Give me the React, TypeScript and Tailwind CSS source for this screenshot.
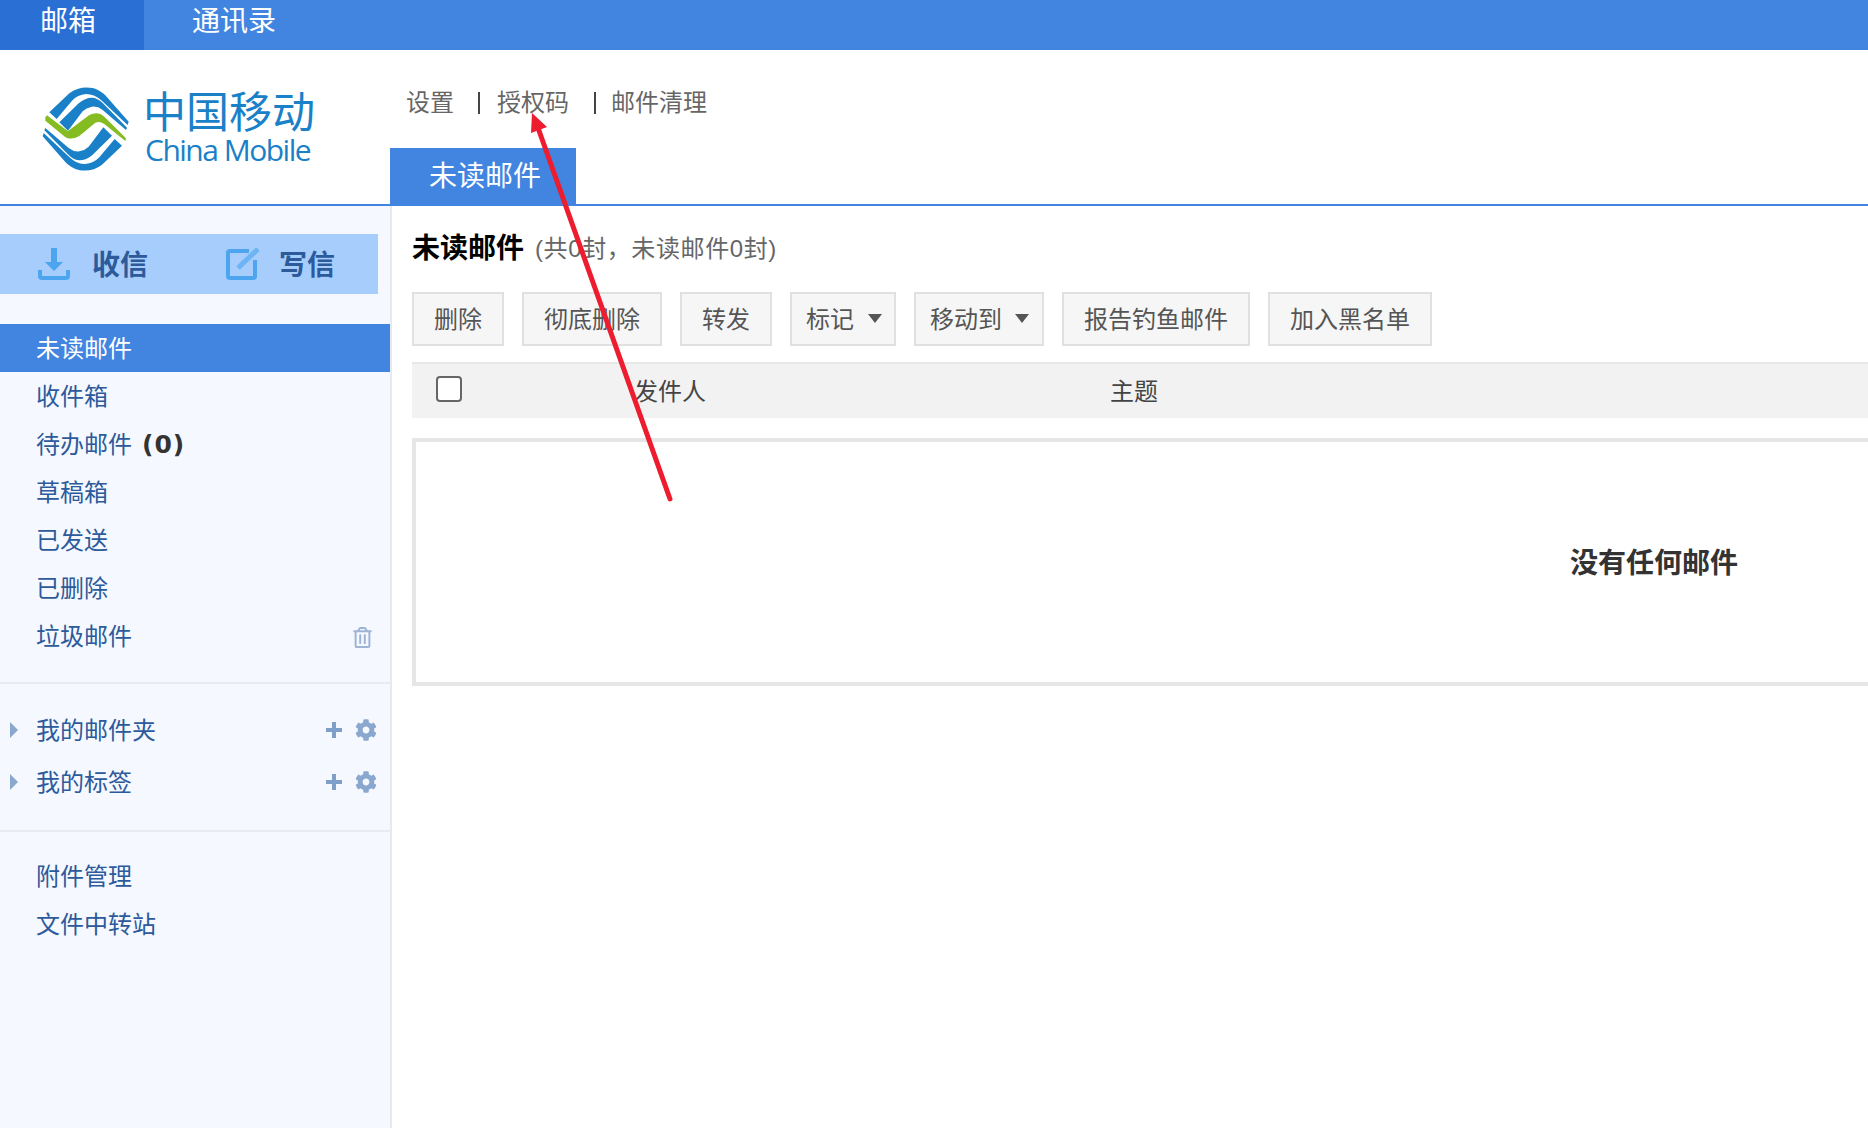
import React from "react";
import { FaCog, FaRegTrashAlt } from "react-icons/fa";

function Emblem() {
  const bands = (
    <>
      <path d="M40 97 L100 40 Q130 17 170 24 Q190 29 208 46 L278 125 L275 135 L195 60 Q175 42 150 42 Q125 44 108 62 L62 117 Z" fill="#1a80c8" />
      <path d="M70 127 L128 70 Q148 52 170 53 Q186 55 200 69 L273 143 L270 150 L200 90 Q185 78 168 80 Q150 84 140 94 L96 152 Z" fill="#1a80c8" />
    </>
  );
  return (
    <svg width="100" height="100" viewBox="0 0 300 300" className="shrink-0">
      {bands}
      <g transform="rotate(180 149 147)">{bands}</g>
      <path d="M28 112 L33 106 L95 153 L100 150 L160 105 Q185 92 205 110 L270 175 L268 183 L205 132 Q190 122 178 128 L130 168 Q100 185 80 165 L28 122 Z" fill="#85bc22" />
    </svg>
  );
}

function DownloadIcon() {
  return (
    <svg width="32" height="32" viewBox="0 0 32 32" className="shrink-0">
      <path d="M13 0 H19 V14 H25 L16 23 L7 14 H13 Z" fill="#4ea5ef" />
      <path d="M2 22 V28 Q2 30 4 30 H28 Q30 30 30 28 V22" fill="none" stroke="#4ea5ef" strokeWidth="4" />
    </svg>
  );
}

function ComposeIcon() {
  return (
    <svg width="34" height="32" viewBox="0 0 34 32" className="shrink-0">
      <path d="M24 3 H5 Q3 3 3 5 V28 Q3 30 5 30 H28 Q30 30 30 28 V12" fill="none" stroke="#4ea5ef" strokeWidth="4" />
      <path d="M33 1 L13 20" fill="none" stroke="#6cb4f3" strokeWidth="5" />
    </svg>
  );
}

function Caret() {
  return (
    <svg width="14" height="9" viewBox="0 0 14 9" className="shrink-0">
      <polygon points="0,0 14,0 7,9" fill="#555" />
    </svg>
  );
}

function SideArrow() {
  return (
    <svg width="8" height="16" viewBox="0 0 8 16" className="shrink-0">
      <polygon points="0,0 8,8 0,16" fill="#8aa8cf" />
    </svg>
  );
}

function Plus() {
  return (
    <svg width="16" height="16" viewBox="0 0 16 16" className="shrink-0">
      <path d="M6 0 H10 V6 H16 V10 H10 V16 H6 V10 H0 V6 H6 Z" fill="#7e9fc8" />
    </svg>
  );
}

const btnBase =
  "h-[54px] pt-[2px] border-2 border-[#e0e0e0] bg-[#f6f6f6] text-[24px] text-[#555] flex items-center";

function SideRow({ label, active, children }: { label: string; active?: boolean; children?: React.ReactNode }) {
  return (
    <div
      className={
        active
          ? "h-[48px] pt-[2px] flex items-center pl-[36px] text-[24px] bg-[#4285e0] text-white"
          : "h-[48px] pt-[2px] flex items-center pl-[36px] text-[24px] text-[#2c5a9b]"
      }
    >
      {label}
      {children}
    </div>
  );
}

function FolderRow({ label }: { label: string }) {
  return (
    <div className="h-[52px] flex items-center pl-[10px] text-[24px] text-[#2c5a9b]">
      <SideArrow />
      <span className="ml-[18px] pt-[2px]">{label}</span>
      <div className="ml-auto mr-[13px] flex items-center">
        <Plus />
        <FaCog className="ml-[13px] text-[22px] text-[#8aa8cf]" />
      </div>
    </div>
  );
}

export default function App() {
  return (
    <div className="relative h-screen w-full overflow-hidden bg-white flex flex-col [font-family:'Liberation_Sans','Noto_Sans_CJK_SC',sans-serif]">
      <div className="h-[50px] shrink-0 bg-[#4285e0] flex text-[28px] text-white">
        <div className="w-[144px] bg-[#2a6fd4] pl-[40px] pb-[6px] flex items-center">邮箱</div>
        <div className="ml-[48px] pb-[6px] flex items-center">通讯录</div>
      </div>

      <div className="h-[156px] shrink-0 border-b-2 border-[#4285e0] flex">
        <div className="w-[390px] shrink-0 pl-[36px] pt-[30px] flex items-start">
          <Emblem />
          <div className="ml-[7px] mt-[11px] w-[174px] text-[#1a80c8]">
            <div className="text-[43px] leading-[44px]">中国移动</div>
            <div className="text-[30px] leading-[30px] font-medium tracking-[-1.5px] ml-[2px] whitespace-nowrap [font-family:'Open_Sans',sans-serif]">China Mobile</div>
          </div>
        </div>
        <div className="flex flex-col">
          <div className="h-[98px] pl-[16px] pt-[8px] flex items-center text-[24px] text-[#666]">
            <span>设置</span>
            <span className="ml-[24px] w-[2px] h-[22px] bg-[#444]" />
            <span className="ml-[17px]">授权码</span>
            <span className="ml-[25px] w-[2px] h-[22px] bg-[#444]" />
            <span className="ml-[15px]">邮件清理</span>
          </div>
          <div className="w-[186px] h-[56px] pt-[2px] bg-[#4285e0] pl-[39px] flex items-center text-[28px] text-white">未读邮件</div>
        </div>
      </div>

      <div className="flex-1 min-h-0 flex">
        <aside className="w-[392px] shrink-0 bg-[#f5f8ff] border-r-2 border-[#e6e9f0]">
          <div className="mt-[28px] w-[378px] h-[60px] bg-[#a6cdfb] flex items-center pl-[38px] text-[28px] font-bold text-[#2c5a9b]">
            <DownloadIcon />
            <span className="ml-[22px] pt-[4px]">收信</span>
            <span className="ml-[77px]"><ComposeIcon /></span>
            <span className="ml-[20px] pt-[4px]">写信</span>
          </div>
          <div className="mt-[30px]">
            <SideRow label="未读邮件" active />
            <SideRow label="收件箱" />
            <SideRow label="待办邮件">
              <span className="ml-[10px] text-[25px] font-bold text-[#333] tracking-[1px] [font-family:'DejaVu_Sans',sans-serif]">(0)</span>
            </SideRow>
            <SideRow label="草稿箱" />
            <SideRow label="已发送" />
            <SideRow label="已删除" />
            <div className="h-[48px] pt-[2px] flex items-center pl-[36px] pr-[17px] text-[24px] text-[#2c5a9b]">
              <span>垃圾邮件</span>
              <FaRegTrashAlt className="ml-auto text-[21px] text-[#9db4d4]" />
            </div>
          </div>
          <div className="mt-[22px] h-[2px] bg-[#e9ebf0]" />
          <div className="pt-[20px] pb-[22px]">
            <FolderRow label="我的邮件夹" />
            <FolderRow label="我的标签" />
          </div>
          <div className="h-[2px] bg-[#e9ebf0]" />
          <div className="pt-[20px]">
            <SideRow label="附件管理" />
            <SideRow label="文件中转站" />
          </div>
        </aside>

        <main className="flex-1 min-w-0 overflow-hidden pl-[20px]">
          <div className="w-[2484px]">
            <div className="mt-[13px] h-[56px] pt-[3px] flex items-center">
              <span className="text-[28px] font-bold text-black">未读邮件</span>
              <span className="ml-[11px] text-[24px] tracking-[0.6px] text-[#666]">(共0封，未读邮件0封)</span>
            </div>
            <div className="mt-[17px] flex gap-[18px]">
              <div className={btnBase + " w-[92px] justify-center"}>删除</div>
              <div className={btnBase + " w-[140px] justify-center"}>彻底删除</div>
              <div className={btnBase + " w-[92px] justify-center"}>转发</div>
              <div className={btnBase + " w-[106px] pl-[14px]"}>
                标记
                <span className="ml-[14px] mb-[3px]"><Caret /></span>
              </div>
              <div className={btnBase + " w-[130px] pl-[14px]"}>
                移动到
                <span className="ml-[13px] mb-[3px]"><Caret /></span>
              </div>
              <div className={btnBase + " w-[188px] justify-center"}>报告钓鱼邮件</div>
              <div className={btnBase + " w-[164px] justify-center"}>加入黑名单</div>
            </div>
            <div className="mt-[16px] h-[56px] border-t-2 border-[#e8e8e8] bg-[#f2f2f2] flex items-center text-[24px] text-[#444]">
              <span className="ml-[24px] mb-[4px] w-[26px] h-[26px] shrink-0 rounded-[4px] border-2 border-[#666] bg-white" />
              <span className="ml-[172px] w-[476px] pt-[2px]">发件人</span>
              <span className="pt-[2px]">主题</span>
            </div>
            <div className="mt-[20px] h-[248px] pt-[4px] border-4 border-[#e6e6e6] flex items-center justify-center text-[28px] font-bold text-[#333]">
              没有任何邮件
            </div>
          </div>
        </main>
      </div>

      <svg className="absolute left-0 top-0 pointer-events-none" width="1868" height="1128" viewBox="0 0 1868 1128">
        <path d="M537 125 L670 499" stroke="#ed1c2e" strokeWidth="5" strokeLinecap="round" fill="none" />
        <polygon points="532,113 547,127 531,133" fill="#ed1c2e" />
      </svg>
    </div>
  );
}
